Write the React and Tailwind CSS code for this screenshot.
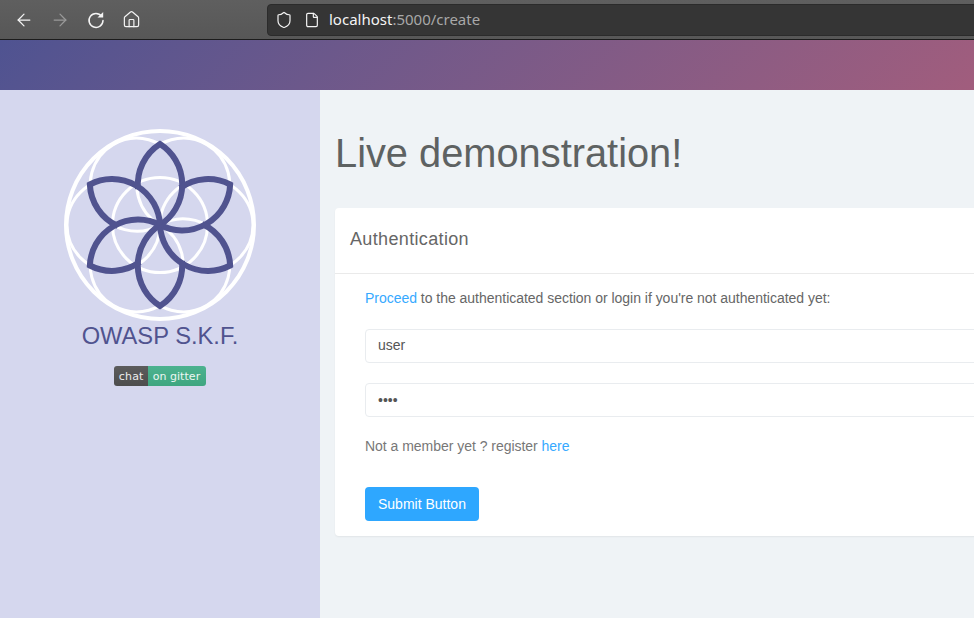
import React from "react";
import { ArrowLeft, ArrowRight, Home, Shield, File } from "lucide-react";

const angles = [0, 60, 120, 180, 240, 300];

function SkfLogo() {
  return (
    <svg width="192" height="192" viewBox="-96 -96 192 192" fill="none">
      <circle cx="0" cy="0" r="94" stroke="#fff" strokeWidth="4" />
      <circle cx="0" cy="0" r="47.5" stroke="#fff" strokeWidth="3" />
      {angles.map((a) => (
        <circle key={a} cx="0" cy="-46.5" r="46.5" stroke="#fff" strokeWidth="3" transform={`rotate(${a + 30})`} />
      ))}
      {angles.map((a) => (
        <path
          key={a}
          transform={`rotate(${a})`}
          d="M-22 -36 A48 48 0 0 1 0 -81 A48 48 0 0 1 0 0"
          stroke="#50538f"
          strokeWidth="6"
        />
      ))}
    </svg>
  );
}

// firefox style reload, arc with a solid arrow head
function ReloadIcon() {
  return (
    <svg width="20" height="20" viewBox="0 0 20 20" fill="none">
      <path d="M15.6 6.2 A7 7 0 1 0 17 10.5" stroke="currentColor" strokeWidth="1.5" strokeLinecap="round" />
      <path d="M11.5 7.5 L17.2 7.5 L17.2 2 Z" fill="currentColor" />
    </svg>
  );
}

function Browser() {
  return (
    <div className="flex h-10 shrink-0 items-center border-b border-[#1c1c1c] bg-gradient-to-b from-[#5f5f5f] to-[#575757]">
      <div className="flex w-[267px] shrink-0 items-center gap-[16px] pl-[14px] text-[#f4f4f4]">
        <ArrowLeft size={20} strokeWidth={1.5} />
        <ArrowRight size={20} strokeWidth={1.5} className="text-[#9a9a9a]" />
        <ReloadIcon />
        <Home size={19} strokeWidth={1.5} />
      </div>
      <div className="-mr-2 flex h-[32px] flex-1 items-center rounded border border-[#2b2b2b] bg-[#353535] pl-[7px] text-[#f4f4f4]">
        <Shield size={18} strokeWidth={1.6} />
        <File size={16} strokeWidth={1.8} className="ml-[11px]" />
        <span className="ml-[9px] font-['Noto_Sans',sans-serif] text-[15px]">
          localhost<span className="text-[#a8a8a8]">:5000/create</span>
        </span>
      </div>
    </div>
  );
}

function Sidebar() {
  return (
    <aside className="flex w-[320px] shrink-0 flex-col items-center bg-[#d5d7ee] pt-[39px]">
      <SkfLogo />
      <div className="mt-[1px] text-[23.7px] leading-[28px] text-[#50538f]">OWASP S.K.F.</div>
      <div className="mt-[16px] flex h-5 overflow-hidden rounded-[3px] text-[11px] leading-[21px] text-white/90 font-['DejaVu_Sans',sans-serif]">
        <span className="bg-gradient-to-b from-[#5c5c5c] to-[#4d4d4d] pl-[5px] pr-[4px] tracking-[0.2px]">chat</span>
        <span className="bg-gradient-to-b from-[#4cb28f] to-[#3fa680] pl-[5px] pr-[6px] tracking-[0.05px]">on gitter</span>
      </div>
    </aside>
  );
}

export default function App() {
  return (
    <div className="flex h-[618px] w-[974px] flex-col overflow-hidden bg-[#eff3f6] font-['Liberation_Sans',sans-serif] text-[14px] text-[#666]">
      <Browser />
      <div className="h-[50px] shrink-0 bg-linear-135 from-[#4f5391] to-[#a15d7d]" />
      <div className="flex min-h-0 flex-1">
        <Sidebar />
        <main className="min-w-0 flex-1 overflow-hidden pl-[15px]">
          <h1 className="mt-[37px] text-[39.8px] leading-[52px] text-[#5e6262]">Live demonstration!</h1>
          <section className="mt-[29px] w-[760px] rounded bg-white shadow-[0_1px_2px_rgba(0,0,0,0.06)]">
            <div className="flex h-[66px] items-center border-b border-[#eaeaea] px-[15px] pb-[2px] text-[18px] tracking-[0.35px] text-[#666]">
              Authentication
            </div>
            <div className="px-[30px] pb-[15px] pt-[16px]">
              <p className="leading-[17px] tracking-[-0.025px]">
                <a className="text-[#36a9ff]">Proceed</a> to the authenticated section or login if you're not authenticated yet:
              </p>
              <input
                readOnly
                value="user"
                className="mt-[22px] block h-[34px] w-full rounded border border-[#e9ecef] px-3 pb-[2px] text-[#555] outline-none"
              />
              <input
                readOnly
                type="password"
                value="user"
                className="mt-[20px] block h-[34px] w-full rounded border border-[#e9ecef] px-3 text-[#555] outline-none"
              />
              <p className="mt-[21px] leading-[17px] tracking-[-0.03px] text-[#777]">
                Not a member yet ? register <a className="text-[#36a9ff]">here</a>
              </p>
              <button className="mt-[32px] block h-[34px] rounded bg-[#2ea7ff] px-[13px] text-white">Submit Button</button>
            </div>
          </section>
        </main>
      </div>
    </div>
  );
}
